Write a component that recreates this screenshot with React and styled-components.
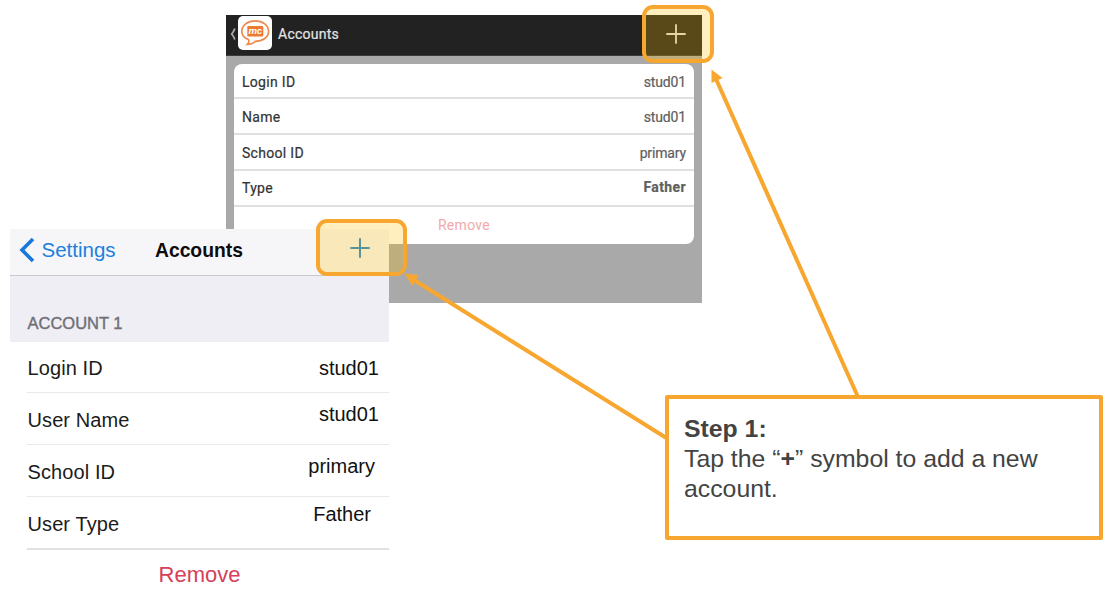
import React from "react";
import styled, { createGlobalStyle } from "styled-components";

const ORANGE = "#f7a72f";

const GlobalStyle = createGlobalStyle`
  *, *::before, *::after { box-sizing: border-box; }
  body { margin: 0; background: #fff; }
`;

const Canvas = styled.main`
  position: relative;
  width: 1109px;
  height: 598px;
  overflow: hidden;
  background: #fff;
  font-family: "Liberation Sans", Arial, sans-serif;
`;

/* Android screen */
const AndroidScreen = styled.section`
  position: absolute;
  left: 226px;
  top: 15px;
  width: 476px;
  height: 288px;
  background: #a9a9a9;
  font-family: Roboto, "Liberation Sans", sans-serif;
`;

const ActionBar = styled.header`
  display: flex;
  align-items: flex-start;
  height: 41px;
  padding: 1px 16px 0 4px;
  background: #222;
  border-bottom: 1px solid #3b3b3b;
`;

const BackMark = styled.svg`
  width: 6px;
  height: 14px;
  margin: 11px 2px 0 0;
`;

const Logo = styled.svg`
  width: 34px;
  height: 34px;
`;

const ActionTitle = styled.h1`
  flex: 1;
  margin: 0 0 0 6px;
  font-size: 14px;
  font-weight: 400;
  line-height: 36px;
  letter-spacing: 0.25px;
  color: #e4e4e4;
  -webkit-text-stroke: 0.2px #e4e4e4;
`;

const AddIcon = styled.svg`
  width: 20px;
  height: 20px;
  margin-top: ${(p) => p.$top}px;
`;

const AndroidCard = styled.div`
  margin: 8px 8px 0;
  height: 180px;
  border-radius: 8px;
  background: #fff;
  overflow: hidden;
`;

const AndroidRow = styled.div`
  display: flex;
  justify-content: space-between;
  align-items: center;
  height: ${(p) => p.$height}px;
  padding: ${(p) => p.$pad}px 8px 0;
  border-bottom: 2px solid #e0e0e0;
  font-size: 14px;
  letter-spacing: 0.3px;
  color: #333;
  -webkit-text-stroke: 0.2px #333;
`;

const AndroidValue = styled.span`
  color: #606060;
  -webkit-text-stroke: 0.2px #606060;
  font-weight: ${(p) => (p.$bold ? 700 : 400)};
  font-size: 14px;
  letter-spacing: ${(p) => (p.$bold ? 0.4 : -0.15)}px;
  margin-bottom: ${(p) => (p.$bold ? 2 : 0)}px;
`;

const AndroidRemove = styled.div`
  text-align: center;
  line-height: 37px;
  font-size: 14px;
  letter-spacing: 0.3px;
  color: #f3a9ab;
`;

/* iOS screen */
const IosScreen = styled.section`
  position: absolute;
  left: 10px;
  top: 229px;
  width: 379px;
  height: 369px;
  background: #fff;
`;

const NavBar = styled.header`
  display: flex;
  align-items: flex-start;
  height: 47px;
  padding-left: 9px;
  background: #f6f6f8;
  border-bottom: 1px solid #c9c9d0;
  line-height: 42px;
`;

const Chevron = styled.svg`
  width: 16px;
  height: 26px;
  margin-top: 8px;
`;

const BackLabel = styled.span`
  width: 113px;
  padding-left: 6.5px;
  font-size: 20.5px;
  color: #2080dc;
`;

const NavTitle = styled.h2`
  width: 202px;
  margin: 0;
  padding: 1px 0 0 7px;
  font-size: 19.3px;
  font-weight: 700;
  color: #0c0c0c;
`;

const GroupTitle = styled.div`
  height: 66px;
  padding: 37px 0 0 17.5px;
  background: #efeef4;
  font-size: 16.5px;
  line-height: 20px;
  color: #6f6f74;
  -webkit-text-stroke: 0.4px #6f6f74;
`;

const IosRow = styled.div`
  display: flex;
  justify-content: space-between;
  height: ${(p) => p.$height}px;
  margin-left: 17px;
  border-bottom: ${(p) => (p.$last ? 2 : 1)}px solid ${(p) => (p.$last ? "#e2e2e2" : "#e9e9e9")};
  font-size: 20px;
  letter-spacing: 0.1px;
  line-height: ${(p) => p.$line}px;
  color: #1c1c1c;
`;

const IosLabel = styled.span`
  padding-left: 0.5px;
`;

const IosValue = styled.span`
  line-height: ${(p) => p.$line}px;
  padding-right: ${(p) => p.$right}px;
  letter-spacing: 0;
  color: #111;
`;

const IosRemove = styled.div`
  line-height: 49px;
  font-size: 22px;
  text-align: center;
  color: #d5405a;
`;

/* Annotations */
const Highlight = styled.div`
  position: absolute;
  left: ${(p) => p.$x}px;
  top: ${(p) => p.$y}px;
  width: ${(p) => p.$w}px;
  height: ${(p) => p.$h}px;
  border-radius: 11px;
  background: rgba(255, 190, 0, 0.25);
  border: 4px solid ${ORANGE};
  background-clip: padding-box;
`;

const Arrows = styled.svg`
  position: absolute;
  inset: 0;
  width: 1109px;
  height: 598px;
`;

const StepBox = styled.aside`
  position: absolute;
  left: 665px;
  top: 395px;
  width: 438px;
  height: 145px;
  padding: 15px 15px;
  border: 4px solid ${ORANGE};
  border-radius: 2px;
  background: #fff;
  font-size: 24.8px;
  line-height: 30px;
  color: #434343;
`;

const StepText = styled.p`
  margin: 0;
`;

const Plus = ({ top, color, width }) => (
  <AddIcon $top={top} viewBox="0 0 20 20" aria-label="Add">
    <path d="M10 0.3V19.7M0.3 10H19.7" stroke={color} strokeWidth={width} />
  </AddIcon>
);

const androidRows = [
  { label: "Login ID", value: "stud01", height: 35, pad: 2 },
  { label: "Name", value: "stud01", height: 36, pad: 1 },
  { label: "School ID", value: "primary", height: 36, pad: 1 },
  { label: "Type", value: "Father", height: 36, pad: 0, bold: true },
];

const iosRows = [
  { label: "Login ID", value: "stud01", height: 51, line: 52, valueLine: 52, right: 10 },
  { label: "User Name", value: "stud01", height: 52, line: 54, valueLine: 42, right: 10 },
  { label: "School ID", value: "primary", height: 52, line: 54, valueLine: 43, right: 14 },
  { label: "User Type", value: "Father", height: 53, line: 54, valueLine: 34, right: 18 },
];

export default function App() {
  return (
    <>
      <GlobalStyle />
      <Canvas>
        <AndroidScreen>
          <ActionBar>
            <BackMark viewBox="0 0 6 14">
              <path d="M4.8 1.5C4 4 3 5.500 1.700 7C3 8.500 4 10 4.800 12.500" fill="none" stroke="#aaa" strokeWidth="1.8" />
            </BackMark>
            <Logo viewBox="0 0 34 34">
              <rect width="34" height="34" rx="5" fill="#fff" />
              <path
                d="M10.500 23.500C6.200 22 3.800 19.400 3.800 15.300C3.800 9.300 9.700 4.800 17.200 4.800S30.600 9.300 30.600 15.300S24.700 25.300 17.200 25.300C15.800 27 13 28.400 9.300 28.400C10.800 27 11.200 25.500 10.500 23.500Z"
                fill="#fff"
                stroke="#ee8a4b"
                strokeWidth="1.7"
              />
              <rect x="9.300" y="10" width="16" height="10.500" rx="1.200" fill="#ee7a32" />
              <text x="17.300" y="18.200" textAnchor="middle" fontFamily="Liberation Sans, sans-serif" fontStyle="italic" fontWeight="700" fontSize="9.500" fill="#fff">mc</text>
            </Logo>
            <ActionTitle>Accounts</ActionTitle>
            <Plus top={8} color="#dedede" width={1.8} />
          </ActionBar>
          <AndroidCard>
            {androidRows.map((r) => (
              <AndroidRow key={r.label} $height={r.height} $pad={r.pad}>
                <span>{r.label}</span>
                <AndroidValue $bold={r.bold}>{r.value}</AndroidValue>
              </AndroidRow>
            ))}
            <AndroidRemove>Remove</AndroidRemove>
          </AndroidCard>
        </AndroidScreen>

        <IosScreen>
          <NavBar>
            <Chevron viewBox="0 0 16 26">
              <path d="M14 2L3 13L14 24" fill="none" stroke="#1877dc" strokeWidth="3.6" />
            </Chevron>
            <BackLabel>Settings</BackLabel>
            <NavTitle>Accounts</NavTitle>
            <Plus top={9} color="#2584cf" width={2} />
          </NavBar>
          <GroupTitle>ACCOUNT 1</GroupTitle>
          {iosRows.map((r, i) => (
            <IosRow key={r.label} $height={r.height} $line={r.line} $last={i === iosRows.length - 1}>
              <IosLabel>{r.label}</IosLabel>
              <IosValue $line={r.valueLine} $right={r.right}>{r.value}</IosValue>
            </IosRow>
          ))}
          <IosRemove>Remove</IosRemove>
        </IosScreen>

        <Highlight $x={642} $y={5} $w={72} $h={58} />
        <Highlight $x={316} $y={219} $w={91} $h={57} />

        <Arrows viewBox="0 0 1109 598">
          <g stroke={ORANGE} strokeWidth="4">
            <path d="M668 439L414 280" />
            <path d="M858 397L716 79" />
          </g>
          <path d="M404.500 273.500L418.500 275L412.500 286Z" fill={ORANGE} />
          <path d="M711.500 69.500L722.500 78L711.500 83Z" fill={ORANGE} />
        </Arrows>

        <StepBox>
          <StepText><b>Step 1:</b></StepText>
          <StepText>Tap the “<b>+</b>” symbol to add a new account.</StepText>
        </StepBox>
      </Canvas>
    </>
  );
}
